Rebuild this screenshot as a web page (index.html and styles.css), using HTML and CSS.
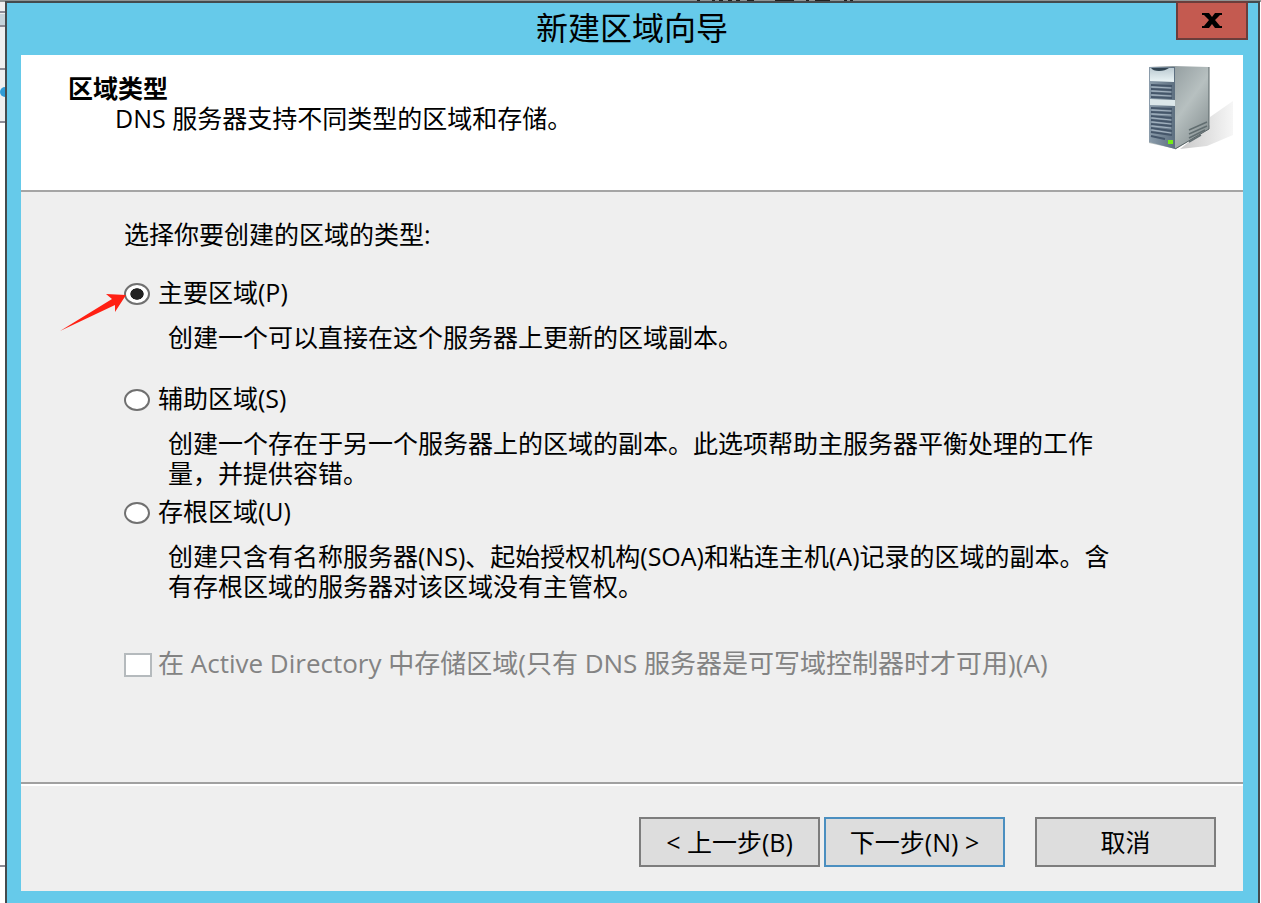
FILE: index.html
```
<!DOCTYPE html>
<html lang="zh-CN">
<head>
    <meta charset="UTF-8">
    <meta name="viewport" content="width=device-width, initial-scale=1.0">
    <title>新建区域向导</title>
    <link rel="stylesheet" href="styles.css">
</head>
<body>
<!-- window edges showing behind the dialog -->
<svg class="backdrop" aria-hidden="true">
    <rect width="100%" height="2" fill="#8f9494"/>
    <path d="M697 0h3M712 0h3M719 0h4M728 0h4M736 0h4M747 0h7M775 0h19M806 0h3M815 0h15M844 0h3M850 0h3" stroke="#222" stroke-width="3"/>
    <rect y="2" width="6" height="120" fill="#efefef"/>
    <path d="M0 12h6M0 26h6M0 69h6M0 122h6M0 866h6" stroke="#8c8c96" stroke-width="2"/>
    <rect y="14" width="6" height="11" fill="#c5d3da"/>
    <circle cx="5" cy="92" r="5" fill="#2f9bd6"/>
</svg>

<div class="wizard">
    <div class="titlebar">
        <h1>新建区域向导</h1>
        <button class="close" type="button" aria-label="关闭">
            <svg width="20" height="15" viewBox="0 0 20 15"><path d="M0 0h7l3 4 3-4h7v2h-2l-5 5 5 6h2v2h-7l-3-4-3 4H0v-2h2l5-6-5-5H0z"/></svg>
        </button>
    </div>

    <form class="page">
        <div class="header">
            <div class="heading">
                <h2>区域类型</h2>
                <p>DNS 服务器支持不同类型的区域和存储。</p>
            </div>
            <svg class="server" width="88" height="88" viewBox="0 0 88 88" aria-hidden="true">
                <defs>
                    <linearGradient id="side" x1="0" y1="0" x2="1" y2="1">
                        <stop offset="0" stop-color="#7f8a8e"/>
                        <stop offset="0.55" stop-color="#b7c0c0"/>
                        <stop offset="1" stop-color="#7d8789"/>
                    </linearGradient>
                    <linearGradient id="front" x1="0" y1="0" x2="1" y2="0">
                        <stop offset="0" stop-color="#8b9cab"/>
                        <stop offset="1" stop-color="#5d6f80"/>
                    </linearGradient>
                    <linearGradient id="panel" x1="0" y1="0" x2="0" y2="1">
                        <stop offset="0" stop-color="#bccbd2"/>
                        <stop offset="1" stop-color="#eaf4f6"/>
                    </linearGradient>
                    <linearGradient id="shadow" x1="0" y1="0" x2="1" y2="0">
                        <stop offset="0" stop-color="#c9c9c9"/>
                        <stop offset="1" stop-color="#f6f6f6"/>
                    </linearGradient>
                </defs>
                <path d="M33 84L63 60V52L86 36V70L60 81z" fill="url(#shadow)"/>
                <path d="M2 2L26 1L62 2V64L29 84L2 78z" fill="url(#side)"/>
                <path d="M2 2L28 2V84L2 77z" fill="url(#front)"/>
                <path d="M3 3H27V17L3 16z" fill="url(#panel)"/>
                <path d="M4 3H22Q18 6 12 6Q6 6 4 3z" fill="#314452"/>
                <path d="M3 34L28 35V41L3 40z" fill="#dce7ea"/>
                <path d="M4 20L25 21M4 24L25 25M4 28L25 29M4 32L25 33M4 43L25 44M4 47L25 48M4 51L25 53M4 55L25 57M4 59L25 61M4 63L25 66M4 67L25 70M4 71L18 74" stroke="#45566a" stroke-width="2"/>
                <path d="M5 22L24 23M5 26L24 27M5 30L24 31M5 45L24 46M5 49L24 50M5 53L24 55M5 57L24 59M5 61L24 63M5 65L24 68" stroke="#a5b4c2"/>
                <rect x="21" y="75" width="5" height="4" fill="#75ee16"/>
                <path d="M42 65L60 57M42 69L60 61M42 73L58 65M42 77L54 70" stroke="#616d70" stroke-width="1.5"/>
                <path d="M28 84L62 64V2" fill="none" stroke="#596467"/>
            </svg>
        </div>

        <div class="content">
            <p class="intro">选择你要创建的区域的类型:</p>

            <div class="option primary">
                <label><input type="radio" name="zone" checked>主要区域(P)</label>
                <p>创建一个可以直接在这个服务器上更新的区域副本。</p>
                <svg class="arrow" width="66" height="38" viewBox="0 0 66 38" aria-hidden="true"><path d="M0 37L52 5 46 0 66 1 55 18 55 11z" fill="#ff2013"/></svg>
            </div>
            <div class="option">
                <label><input type="radio" name="zone">辅助区域(S)</label>
                <p>创建一个存在于另一个服务器上的区域的副本。此选项帮助主服务器平衡处理的工作<br>量，并提供容错。</p>
            </div>
            <div class="option">
                <label><input type="radio" name="zone">存根区域(U)</label>
                <p>创建只含有名称服务器(NS)、起始授权机构(SOA)和粘连主机(A)记录的区域的副本。含<br>有存根区域的服务器对该区域没有主管权。</p>
            </div>

            <label class="store"><input type="checkbox" disabled>在 Active Directory 中存储区域(只有 DNS 服务器是可写域控制器时才可用)(A)</label>
        </div>

        <div class="footer">
            <button type="button">&lt; 上一步(B)</button>
            <button type="button" class="default">下一步(N) &gt;</button>
            <button type="button" class="cancel">取消</button>
        </div>
    </form>
</div>
</body>
</html>
```

FILE: styles.css
```
* {
    box-sizing: border-box;
    margin: 0;
    padding: 0;
}

body {
    display: flex;
    min-height: 100vh;
    padding: 1px 1px 0 5px;
    background-color: #fff;
    color: #000;
    font: 25px/30px "Open Sans", "Noto Sans CJK SC", sans-serif;
}

.backdrop {
    position: absolute;
    top: 0;
    left: 0;
    width: 100%;
    height: 100%;
}

.wizard {
    position: relative;
    flex: 1;
    display: flex;
    flex-direction: column;
    padding: 0 15px 12px 14px;
    background-color: #66caea;
    border: 2px solid #444b4e;
    border-bottom: none;
}

.titlebar {
    position: relative;
    height: 52px;
    flex: none;
}

h1 {
    text-align: center;
    font-size: 32px;
    font-weight: 400;
    line-height: 50px;
}

.close {
    position: absolute;
    top: -2px;
    right: -5px;
    width: 72px;
    height: 39px;
    background-color: #c45a50;
    border: 2px solid #6b3d3b;
}

.close svg {
    display: block;
    margin: 0 auto;
}

.page {
    flex: 1;
    display: flex;
    flex-direction: column;
    background-color: #efefef;
}

.header {
    display: flex;
    justify-content: space-between;
    height: 137px;
    padding: 10px 8px 0 47px;
    background-color: #fff;
    border-bottom: 2px solid #a5a5a5;
}

.heading {
    padding-top: 8px;
}

h2 {
    font-size: 25px;
    line-height: 30px;
}

.heading p {
    padding-left: 47px;
}

.content {
    flex: 1;
    padding: 27px 24px 24px 103px;
}

.intro {
    margin-bottom: 28px;
}

.option {
    position: relative;
    margin-bottom: 8px;
}

.primary {
    margin-bottom: 31px;
}

.option p {
    margin-top: 15px;
    padding-left: 44px;
}

label {
    display: flex;
    align-items: center;
    gap: 8px;
}

input {
    appearance: none;
    flex: none;
    width: 26px;
    height: 22px;
    margin-top: 4px;
    background-color: #fff;
}

input[type="radio"] {
    border: 2px solid #707070;
    border-radius: 50%;
}

input[type="radio"]:checked {
    background: radial-gradient(ellipse 7px 6px, #222 90%, #fff);
}

input[type="checkbox"] {
    width: 28px;
    height: 24px;
    border: 2px solid #b5babd;
}

.arrow {
    position: absolute;
    top: 17px;
    left: -64px;
}

.store {
    margin-top: 47px;
    gap: 6px;
    color: #838383;
    font-size: 26px;
}

.footer {
    display: flex;
    justify-content: flex-end;
    gap: 4px;
    height: 109px;
    padding: 33px 27px 0;
    border-top: 2px solid #a0a0a0;
    box-shadow: inset 0 2px #fff;
}

.footer button {
    width: 181px;
    height: 50px;
    background-color: #ddd;
    border: 2px solid #7d7d7d;
    color: #000;
    font: inherit;
}

.footer .default {
    border-color: #4b8fc0;
}

.footer .cancel {
    margin-left: 26px;
}
```
